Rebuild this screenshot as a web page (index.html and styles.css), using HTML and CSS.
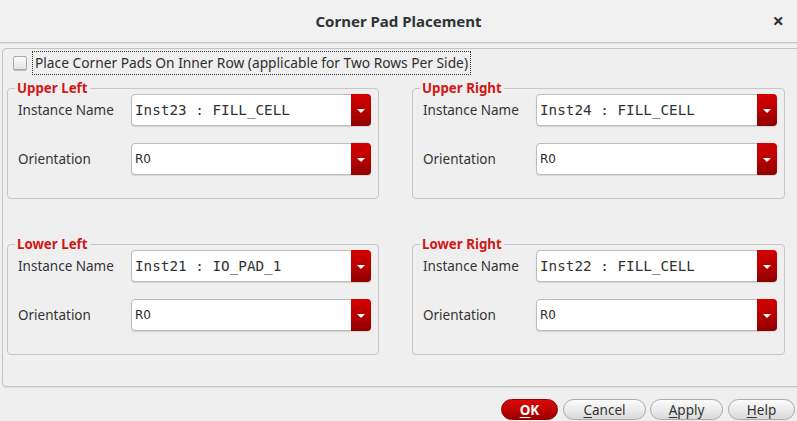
FILE: index.html
```html
<!DOCTYPE html>
<html>
<head>
<meta charset="utf-8">
<title>Corner Pad Placement</title>
<link rel="stylesheet" href="styles.css">
</head>
<body>
<div class="window">
  <header class="titlebar">
    <span></span>
    <h1 class="title">Corner Pad Placement</h1>
    <span class="close">&#xD7;</span>
  </header>
  <section class="panel">
    <div class="check-row">
      <span class="checkbox"></span>
      <span class="check-label">Place Corner Pads On Inner Row (applicable for Two Rows Per Side)</span>
    </div>
    <div class="groups">
      <div class="group">
        <div class="group-title">Upper Left</div>
        <div class="field">
          <span class="label">Instance Name</span>
          <div class="combo"><span class="combo-text mono">Inst23 : FILL_CELL</span><span class="combo-btn"><i class="tri"></i></span></div>
        </div>
        <div class="field">
          <span class="label">Orientation</span>
          <div class="combo"><span class="combo-text">R0</span><span class="combo-btn"><i class="tri"></i></span></div>
        </div>
      </div>
      <div class="group">
        <div class="group-title">Upper Right</div>
        <div class="field">
          <span class="label">Instance Name</span>
          <div class="combo"><span class="combo-text mono">Inst24 : FILL_CELL</span><span class="combo-btn"><i class="tri"></i></span></div>
        </div>
        <div class="field">
          <span class="label">Orientation</span>
          <div class="combo"><span class="combo-text">R0</span><span class="combo-btn"><i class="tri"></i></span></div>
        </div>
      </div>
      <div class="group">
        <div class="group-title">Lower Left</div>
        <div class="field">
          <span class="label">Instance Name</span>
          <div class="combo"><span class="combo-text mono">Inst21 : IO_PAD_1</span><span class="combo-btn"><i class="tri"></i></span></div>
        </div>
        <div class="field">
          <span class="label">Orientation</span>
          <div class="combo"><span class="combo-text">R0</span><span class="combo-btn"><i class="tri"></i></span></div>
        </div>
      </div>
      <div class="group">
        <div class="group-title">Lower Right</div>
        <div class="field">
          <span class="label">Instance Name</span>
          <div class="combo"><span class="combo-text mono">Inst22 : FILL_CELL</span><span class="combo-btn"><i class="tri"></i></span></div>
        </div>
        <div class="field">
          <span class="label">Orientation</span>
          <div class="combo"><span class="combo-text">R0</span><span class="combo-btn"><i class="tri"></i></span></div>
        </div>
      </div>
    </div>
  </section>
  <footer class="buttons">
    <button class="btn btn-ok"><u>O</u>K</button>
    <button class="btn btn-cancel"><u>C</u>ancel</button>
    <button class="btn btn-apply"><u>A</u>pply</button>
    <button class="btn btn-help"><u>H</u>elp</button>
  </footer>
</div>
</body>
</html>
```
FILE: styles.css
```css
html, body {
  margin: 0;
  padding: 0;
}
body {
  width: 797px;
  height: 421px;
  overflow: hidden;
  background: #efefef;
  font-family: "Noto Sans", "Open Sans", sans-serif;
  font-size: 13px;
  color: #333333;
}
.window {
  width: 797px;
  height: 421px;
  overflow: hidden;
}
.titlebar {
  height: 42px;
  display: grid;
  grid-template-columns: 1fr auto 1fr;
  align-items: center;
  background: #f1f1f1;
  border-bottom: 1px solid #c4c4c4;
  box-shadow: 0 1px 0 #e2e2e2;
}
.title {
  margin: 0;
  font-size: 15px;
  font-weight: bold;
  color: #2e3436;
}
.close {
  justify-self: end;
  margin-right: 13px;
  font-size: 20px;
  line-height: 20px;
  font-weight: bold;
  color: #2e3436;
}
.panel {
  margin: 5px -12px 0 2px;
  height: 337px;
  border: 1px solid #c3c3c3;
  border-radius: 4px;
  padding: 0 0 0 4px;
  box-shadow: 0 1px 0 #e0e0e0;
}
.check-row {
  display: flex;
  align-items: center;
  margin: 2px 0 0 6px;
  height: 24px;
}
.checkbox {
  width: 12px;
  height: 12px;
  border: 1px solid #a9a9a9;
  border-radius: 2px;
  background: linear-gradient(#fbfbfb, #e4e4e4);
  box-shadow: 0 1px 0 #bdbdbd;
}
.check-label {
  margin-left: 5px;
  height: 24px;
  box-sizing: border-box;
  border: 1px dotted #333333;
  padding: 0 2px;
  line-height: 22px;
  font-size: 13.75px;
  color: #2e2e2e;
}
.groups {
  margin-top: 13px;
  display: grid;
  grid-template-columns: 372px 373px;
  grid-auto-rows: 111px;
  column-gap: 33px;
  row-gap: 45px;
}
.group {
  box-sizing: border-box;
  border: 1px solid #c6c6c6;
  border-radius: 4px;
  padding: 0 7px 0 10px;
}
.group-title {
  display: table;
  margin: -9px 0 -2px -3px;
  padding: 0 2px;
  background: #efefef;
  line-height: 16px;
  font-size: 13.3px;
  font-weight: bold;
  color: #d01818;
}
.field {
  display: grid;
  grid-template-columns: 113px 1fr;
  align-items: center;
  height: 32px;
}
.field + .field {
  margin-top: 17px;
}
.label {
  font-size: 13.5px;
  color: #333333;
  white-space: nowrap;
}
.combo {
  height: 32px;
  box-sizing: border-box;
  display: flex;
  border: 1px solid #bcbcbc;
  border-radius: 4px;
  background: #ffffff;
  box-shadow: 0 1px 1px rgba(0, 0, 0, 0.12);
}
.combo-text {
  flex: 1;
  padding-left: 3px;
  line-height: 30px;
  font-family: "DejaVu Sans", sans-serif;
  font-size: 12px;
  color: #2a2a2a;
  white-space: pre;
}
.combo-text.mono {
  font-family: "DejaVu Sans Mono", monospace;
  font-size: 14.3px;
  color: #333333;
}
.combo-btn {
  width: 20px;
  margin: -1px -1px -1px 0;
  border-radius: 0 4px 4px 0;
  background: linear-gradient(#d60000, #b00000 60%, #8e0000);
  display: flex;
  align-items: center;
  justify-content: center;
}
.tri {
  width: 0;
  height: 0;
  border-left: 4px solid transparent;
  border-right: 4px solid transparent;
  border-top: 4px solid #ffffff;
  margin-top: 1px;
}
.buttons {
  display: flex;
  justify-content: flex-end;
  gap: 5px;
  margin-top: 12px;
  padding-right: 2px;
}
.btn {
  height: 21px;
  box-sizing: border-box;
  border-radius: 11px;
  font-family: "Noto Sans", "Open Sans", sans-serif;
  font-size: 13.5px;
  line-height: 18px;
  padding: 0;
  color: #333333;
  border: 1px solid #a9a9a9;
  background: linear-gradient(#fcfcfc, #e8e8e8 60%, #d9d9d9);
}
.btn u {
  text-underline-offset: 2px;
}
.btn-ok {
  width: 57px;
  color: #ffffff;
  font-weight: bold;
  border-color: #8c0000;
  background: linear-gradient(#dd0a0a, #b80000 60%, #990000);
}
.btn-cancel {
  width: 83px;
}
.btn-apply {
  width: 73px;
  margin-left: -1px;
}
.btn-help {
  width: 67px;
}
```
